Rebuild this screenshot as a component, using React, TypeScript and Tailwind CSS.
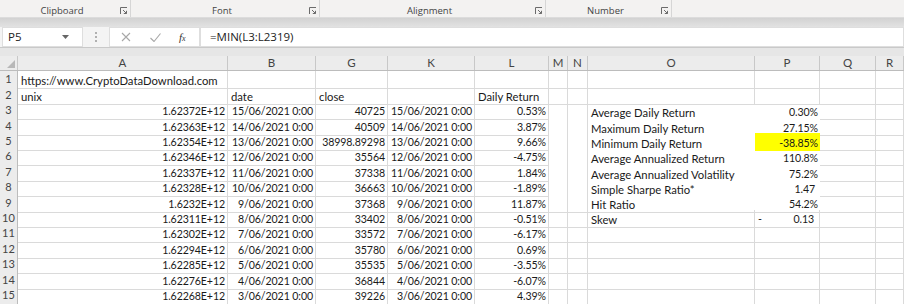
import React from "react"

const COLS = ["A", "B", "G", "K", "L", "M", "N", "O", "P", "Q", "R"]

const ROW_H = ["h-[16px]", "h-[15px]", "h-[16px]", "h-[15px]", "h-[15px]", "h-[16px]", "h-[15px]", "h-[16px]", "h-[15px]", "h-[15px]", "h-[16px]", "h-[15px]", "h-[16px]", "h-[15px]", "h-[16px]"]

// A, B, G, K, L per row (rows 3..15)
const data: string[][] = [
    ["1.62372E+12", "15/06/2021 0:00", "40725", "15/06/2021 0:00", "0.53%"],
    ["1.62363E+12", "14/06/2021 0:00", "40509", "14/06/2021 0:00", "3.87%"],
    ["1.62354E+12", "13/06/2021 0:00", "38998.89298", "13/06/2021 0:00", "9.66%"],
    ["1.62346E+12", "12/06/2021 0:00", "35564", "12/06/2021 0:00", "-4.75%"],
    ["1.62337E+12", "11/06/2021 0:00", "37338", "11/06/2021 0:00", "1.84%"],
    ["1.62328E+12", "10/06/2021 0:00", "36663", "10/06/2021 0:00", "-1.89%"],
    ["1.6232E+12", "9/06/2021 0:00", "37368", "9/06/2021 0:00", "11.87%"],
    ["1.62311E+12", "8/06/2021 0:00", "33402", "8/06/2021 0:00", "-0.51%"],
    ["1.62302E+12", "7/06/2021 0:00", "33572", "7/06/2021 0:00", "-6.17%"],
    ["1.62294E+12", "6/06/2021 0:00", "35780", "6/06/2021 0:00", "0.69%"],
    ["1.62285E+12", "5/06/2021 0:00", "35535", "5/06/2021 0:00", "-3.55%"],
    ["1.62276E+12", "4/06/2021 0:00", "36844", "4/06/2021 0:00", "-6.07%"],
    ["1.62268E+12", "3/06/2021 0:00", "39226", "3/06/2021 0:00", "4.39%"],
]

const stats: [string, string][] = [
    ["Average Daily Return", "0.30%"],
    ["Maximum Daily Return", "27.15%"],
    ["Minimum Daily Return", "-38.85%"],
    ["Average Annualized Return", "110.8%"],
    ["Average Annualized Volatility", "75.2%"],
    ["Simple Sharpe Ratio*", "1.47"],
    ["Hit Ratio", "54.2%"],
]

const Launcher = () => (
    <svg width="8" height="8" viewBox="0 0 8 8" fill="none" stroke="#6b6b6b" strokeWidth="1" className="shrink-0">
        <path d="M0.5 7V0.5H7" />
        <path d="M3 3l3.5 3.5" />
        <path d="M6.5 3.8v2.7H3.8" />
    </svg>
)

type CellProps = {
    children?: React.ReactNode
    right?: boolean
    num?: boolean
    noR?: boolean
    noB?: boolean
    bg?: string
}

// numbers get a smaller size so the Lato digits take Calibri's width
const Cell = ({ children, right, num, noR, noB, bg }: CellProps) => (
    <div
        className={`flex items-end pb-[1px] overflow-visible whitespace-nowrap leading-[13px] ${num ? "text-[10.6px] tracking-[-0.1px]" : ""} ${right ? "justify-end pr-[2px]" : "justify-start pl-[3px]"} ${noR ? "" : "border-r border-r-[#dadada]"} ${noB ? "" : "border-b border-b-[#dadada]"} ${bg ?? ""}`}
    >
        {children}
    </div>
)

const App: React.FC = () => {
    const rows: React.ReactNode[] = []

    for (let r = 1; r <= 15; r++) {
        const cells: React.ReactNode[] = []
        const d = r >= 3 ? data[r - 3] : null
        const inBox = r >= 3 && r <= 8
        const inStat = r >= 3 && r <= 9

        cells.push(
            <Cell key="A" right={!!d} num={!!d}>
                {r === 1 ? "https://www.CryptoDataDownload.com" : r === 2 ? "unix" : d![0]}
            </Cell>
        )
        cells.push(<Cell key="B" right={!!d} num={!!d}>{r === 2 ? "date" : d ? d[1] : ""}</Cell>)
        cells.push(<Cell key="G" right={!!d} num={!!d}>{r === 2 ? "close" : d ? d[2] : ""}</Cell>)
        cells.push(<Cell key="K" right num>{d ? d[3] : ""}</Cell>)
        cells.push(<Cell key="L" right={!!d} num={!!d}>{r === 2 ? "Daily Return" : d ? d[4] : ""}</Cell>)
        cells.push(<Cell key="M" noB={inBox} />)
        cells.push(<Cell key="N" noB={inBox} />)
        if (inStat) {
            const s = stats[r - 3]
            cells.push(<Cell key="O" noR noB={inBox}>{s[0]}</Cell>)
            cells.push(
                <Cell key="P" right num noR noB={inBox} bg={r === 5 ? "bg-[#ffff00]" : ""}>
                    <span className={r === 8 ? "pr-[3px]" : ""}>{s[1]}</span>
                </Cell>
            )
        } else if (r === 10) {
            cells.push(<Cell key="O">Skew</Cell>)
            cells.push(
                <div key="P" className="flex items-end justify-between pb-[1px] pl-[3px] pr-[5px] leading-[13px] text-[10.6px] tracking-[-0.1px] border-r border-b border-[#dadada]">
                    <span>-</span>
                    <span>0.13</span>
                </div>
            )
        } else {
            cells.push(<Cell key="O" />)
            cells.push(<Cell key="P" />)
        }
        cells.push(<Cell key="Q" />)
        cells.push(<Cell key="R" />)

        rows.push(
            <div key={r} className={`grid grid-cols-[18px_210px_88px_72px_87px_74px_19px_20px_167px_65px_56px_1fr] ${ROW_H[r - 1]}`}>
                <div className="flex items-center justify-center bg-[#ececec] border-r border-r-[#bcbcbc] border-b border-b-[#d4d4d4] text-[11px] text-[#444]">
                    {r}
                </div>
                {cells}
            </div>
        )
    }

    return (
        <div className="w-[904px] h-[304px] overflow-hidden bg-white flex flex-col" style={{ fontFamily: "Lato, 'Liberation Sans', sans-serif" }}>
            {/* ribbon group labels */}
            <div className="h-[18px] shrink-0 flex bg-[#f3f2f1] border-b border-b-[#dcdcdc] text-[9.5px] text-[#444]" style={{ fontFamily: "'Open Sans', sans-serif" }}>
                <div className="w-[131px] shrink-0 flex items-center border-r border-r-[#d6d6d6] pr-[2px] pt-[5px]">
                    <span className="flex-1 text-center pl-[4px]">Clipboard</span>
                    <Launcher />
                </div>
                <div className="w-[189px] shrink-0 flex items-center border-r border-r-[#d6d6d6] pr-[2px] pt-[5px]">
                    <span className="flex-1 text-center pl-[4px]">Font</span>
                    <Launcher />
                </div>
                <div className="w-[226px] shrink-0 flex items-center border-r border-r-[#d6d6d6] pr-[2px] pt-[5px]">
                    <span className="flex-1 text-center pl-[4px]">Alignment</span>
                    <Launcher />
                </div>
                <div className="w-[126px] shrink-0 flex items-center border-r border-r-[#d6d6d6] pr-[2px] pt-[5px]">
                    <span className="flex-1 text-center pl-[4px]">Number</span>
                    <Launcher />
                </div>
                <div className="flex-1 flex items-center justify-end pt-[5px] overflow-hidden">
                    <span className="mr-[-26px]">Styles</span>
                </div>
            </div>
            {/* shadow band */}
            <div className="h-[9px] shrink-0 bg-gradient-to-b from-[#d2d2d2] to-[#e2e2e2]" />
            {/* formula bar */}
            <div className="h-[21px] shrink-0 flex items-stretch bg-[#f4f4f4] border-b border-b-[#c9c9c9]">
                <div className="ml-[2px] w-[81px] flex items-center justify-between bg-white border border-[#dedede] pl-[5px] pr-[13px] text-[11.5px] text-[#222]" style={{ fontFamily: "'Open Sans', sans-serif" }}>
                    <span>P5</span>
                    <svg width="7" height="4" viewBox="0 0 7 4"><path d="M0 0h7L3.5 4z" fill="#666" /></svg>
                </div>
                <div className="w-[26px] flex items-center justify-center">
                    <svg width="2" height="10" viewBox="0 0 2 10" fill="#b0b0b0">
                        <rect x="0" y="0" width="2" height="2" />
                        <rect x="0" y="4" width="2" height="2" />
                        <rect x="0" y="8" width="2" height="2" />
                    </svg>
                </div>
                <div className="w-[91px] flex items-center bg-white border border-[#dedede]">
                    <svg width="10" height="10" viewBox="0 0 10 10" className="ml-[11px]" stroke="#a8a8a8" strokeWidth="1.1" fill="none">
                        <path d="M1 1l8 8M9 1l-8 8" />
                    </svg>
                    <svg width="11" height="9" viewBox="0 0 11 9" className="ml-[19px]" stroke="#a8a8a8" strokeWidth="1.1" fill="none">
                        <path d="M0.5 5l3.5 3.5L10.5 0.5" />
                    </svg>
                    <span className="ml-[18px] italic text-[11px] text-[#333]" style={{ fontFamily: "'Liberation Serif', serif" }}>
                        f<span className="text-[8px]">x</span>
                    </span>
                </div>
                <div className="flex-1 flex items-center bg-white border border-[#dedede] pl-[9px] text-[11.5px] text-[#222]" style={{ fontFamily: "'Open Sans', sans-serif" }}>
                    =MIN(L3:L2319)
                </div>
            </div>
            {/* gap band */}
            <div className="h-[8px] shrink-0 bg-[#e6e6e6]" />
            {/* column headers */}
            <div className="h-[15px] shrink-0 grid grid-cols-[18px_210px_88px_72px_87px_74px_19px_20px_167px_65px_56px_1fr] bg-[#ececec] border-b border-b-[#bcbcbc] text-[11.5px] text-[#444]">
                <div className="flex items-end justify-end border-r border-r-[#c8c8c8] pr-[2px] pb-[2px]">
                    <svg width="8" height="8" viewBox="0 0 8 8"><path d="M8 0v8H0z" fill="#b8b8b8" /></svg>
                </div>
                {COLS.map((c) => (
                    <div key={c} className="flex items-center justify-center border-r border-r-[#c8c8c8] leading-none">
                        {c}
                    </div>
                ))}
            </div>
            {/* sheet */}
            <div className="text-[11.3px] text-[#1a1a1a]">{rows}</div>
        </div>
    )
}

export default App
